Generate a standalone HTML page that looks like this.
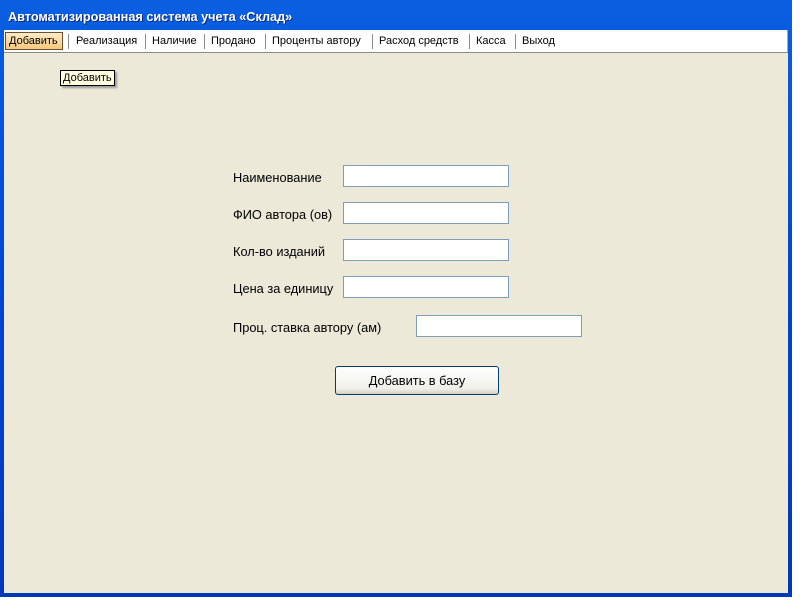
<!DOCTYPE html>
<html><head><meta charset="utf-8"><style>
body{margin:0;width:800px;height:600px;background:#fff;position:relative;overflow:hidden;font-family:"Liberation Sans","DejaVu Sans",sans-serif;font-size:12px}
.win{position:absolute;left:0;top:0;width:792px;height:597px;background:linear-gradient(#0a5fe0,#0044d0 50%,#0038b8);}
.title{position:absolute;left:8px;top:10px;color:#fff;font-weight:bold;font-size:12.7px;text-shadow:1px 1px #0a2a80}
.client{position:absolute;left:4px;top:30px;width:784px;height:563px;background:#ECE9D8}
.menu{position:absolute;left:0;top:0;width:783px;height:22px;background:#fff;border-bottom:1px solid #8a8a8a;border-right:1px solid #aaa}
.mi{position:absolute;top:5px;font-size:11px;color:#000}
.sep{position:absolute;top:4px;width:1px;height:15px;background:#8a8a8a}
.sel{position:absolute;left:1px;top:2px;width:58px;height:18px;background:linear-gradient(#fdecc8,#f8c87a);border:1px solid #6a5030;box-sizing:border-box}
.tip{position:absolute;left:56px;top:40px;border:1px solid #000;background:#ffffe1;font-size:11px;padding:0 2px;height:14px;line-height:14px;box-shadow:2px 2px 2px #999}
.lbl{position:absolute;font-size:12.8px;color:#000}
.inp{position:absolute;width:166px;height:22px;box-sizing:border-box;background:#fff;border:1px solid #7f9db9}
.btn{position:absolute;left:331px;top:336px;width:164px;height:29px;box-sizing:border-box;border:1px solid #003c74;border-radius:3px;background:linear-gradient(#fff,#f0f0ea 80%,#d6d0c5);text-align:center;line-height:27px;font-size:12.8px}
</style></head><body>
<div class="win">
<div class="title">Автоматизированная система учета «Склад»</div>
<div class="client">
<div class="menu">
<div class="sel"></div>
<span class="mi" style="left:5px">Добавить</span>
<div class="sep" style="left:64px"></div><span class="mi" style="left:72px">Реализация</span>
<div class="sep" style="left:141px"></div><span class="mi" style="left:148px">Наличие</span>
<div class="sep" style="left:200px"></div><span class="mi" style="left:207px">Продано</span>
<div class="sep" style="left:261px"></div><span class="mi" style="left:268px">Проценты автору</span>
<div class="sep" style="left:368px"></div><span class="mi" style="left:375px">Расход средств</span>
<div class="sep" style="left:465px"></div><span class="mi" style="left:472px">Касса</span>
<div class="sep" style="left:511px"></div><span class="mi" style="left:518px">Выход</span>
</div>
<div class="tip">Добавить</div>
<span class="lbl" style="left:229px;top:140px">Наименование</span><div class="inp" style="left:339px;top:135px"></div>
<span class="lbl" style="left:229px;top:177px">ФИО автора (ов)</span><div class="inp" style="left:339px;top:172px"></div>
<span class="lbl" style="left:229px;top:214px">Кол-во изданий</span><div class="inp" style="left:339px;top:209px"></div>
<span class="lbl" style="left:229px;top:251px">Цена за единицу</span><div class="inp" style="left:339px;top:246px"></div>
<span class="lbl" style="left:229px;top:290px">Проц. ставка автору (ам)</span><div class="inp" style="left:412px;top:285px"></div>
<div class="btn">Добавить в базу</div>
</div>
</div>
</body></html>
